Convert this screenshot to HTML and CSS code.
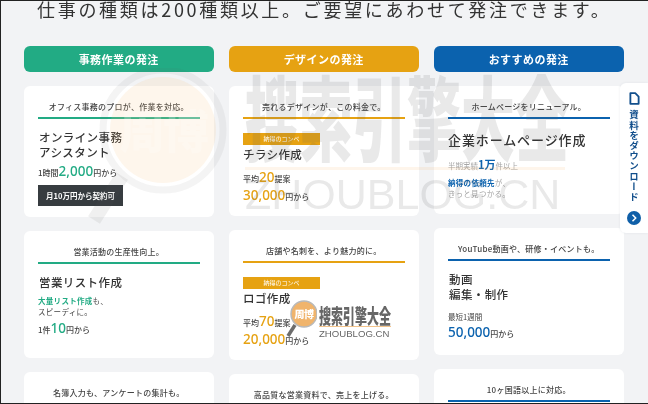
FILE: index.html
```html
<!DOCTYPE html>
<html lang="ja">
<head>
<meta charset="utf-8">
<title>発注</title>
<link rel="stylesheet" href="styles.css">
</head>
<body>
<main class="page">
  <h1 class="lead">仕事の種類は200種類以上。ご要望にあわせて発注できます。</h1>
  <div class="columns">
    <section class="col green">
      <h2 class="head">事務作業の発注</h2>
      <article class="card h1">
        <p class="tag">オフィス事務のプロが、作業を対応。</p>
        <h3 class="title">オンライン事務<br>アシスタント</h3>
        <p class="price-line">1時間<b class="num">2,000</b>円から</p>
        <span class="dark-btn">月10万円から契約可</span>
      </article>
      <article class="card h2">
        <p class="tag">営業活動の生産性向上。</p>
        <h3 class="title">営業リスト作成</h3>
        <p class="note"><b>大量リスト作成</b>も、<br>スピーディに。</p>
        <p class="price-line">1件<b class="num">10</b>円から</p>
      </article>
      <article class="card">
        <p class="tag">名簿入力も、アンケートの集計も。</p>
      </article>
    </section>
    <section class="col orange">
      <h2 class="head">デザインの発注</h2>
      <article class="card h1b">
        <p class="tag">売れるデザインが、この料金で。</p>
        <span class="badge">納得のコンペ</span>
        <h3 class="title">チラシ作成</h3>
        <p class="price-line avg">平均<b class="num">20</b>提案</p>
        <p class="price-line"><b class="num">30,000</b>円から</p>
      </article>
      <article class="card h1b">
        <p class="tag">店舗や名刺を、より魅力的に。</p>
        <span class="badge">納得のコンペ</span>
        <h3 class="title">ロゴ作成</h3>
        <p class="price-line avg">平均<b class="num">70</b>提案</p>
        <p class="price-line"><b class="num">20,000</b>円から</p>
      </article>
      <article class="card">
        <p class="tag">高品質な営業資料で、売上を上げる。</p>
      </article>
    </section>
    <section class="col blue">
      <h2 class="head">おすすめの発注</h2>
      <article class="card h3c">
        <p class="tag">ホームページをリニューアル。</p>
        <h3 class="title big">企業ホームページ作成</h3>
        <p class="small faded">半期実績<b class="num-s">1万</b>件以上</p>
        <p class="note faded tight"><b>納得の依頼先</b>が、<br>きっと見つかる。</p>
      </article>
      <article class="card h3d">
        <p class="tag">YouTube動画や、研修・イベントも。</p>
        <h3 class="title">動画<br>編集・制作</h3>
        <p class="small">最短1週間</p>
        <p class="price-line pull"><b class="num">50,000</b>円から</p>
      </article>
      <article class="card">
        <p class="tag">10ヶ国語以上に対応。</p>
      </article>
    </section>
  </div>
  <aside class="side">
    <svg class="doc" viewBox="0 0 12 14" width="11" height="13" aria-hidden="true"><path d="M1.5 1.2h5.3l3.7 3.7v7.9h-9z" fill="none" stroke="#124f8c" stroke-width="2" stroke-linejoin="round"/></svg>
    <span class="side-text">資料をダウンロード</span>
    <span class="side-go"><svg viewBox="0 0 14 14" width="14" height="14" aria-hidden="true"><path d="M5.5 3.8 8.7 7l-3.2 3.2" fill="none" stroke="#fff" stroke-width="1.5"/></svg></span>
  </aside>
  <div class="mark mark-big" aria-hidden="true">
    <svg class="lens" viewBox="0 0 160 165" width="160" height="165">
      <circle cx="83" cy="62" r="53" class="lens-fill"/>
      <circle cx="83" cy="62" r="60" class="lens-ring"/>
      <path d="M42 108 14 152" class="lens-handle"/>
      <text x="83" y="80" class="lens-text">周博</text>
    </svg>
    <div class="mark-words">
      <span class="mark-cn">搜索引擎大全</span>
      <span class="mark-rule"></span>
      <span class="mark-en">ZHOUBLOG.CN</span>
    </div>
  </div>
  <div class="mark mark-small" aria-hidden="true">
    <svg class="lens-s" viewBox="0 0 34 42" width="34" height="42">
      <circle cx="21" cy="15" r="13" class="s-fill"/>
      <path d="M12 26 5 37" class="s-handle"/>
      <text x="21" y="19" class="s-text">周博</text>
    </svg>
    <div class="mark-words-s">
      <span class="mark-cn-s">搜索引擎大全</span>
      <span class="mark-rule-s"></span>
      <span class="mark-en-s">ZHOUBLOG.CN</span>
    </div>
  </div>
</main>
</body>
</html>
```
FILE: styles.css
```css
* { box-sizing: border-box; margin: 0; padding: 0; }
html, body { width: 648px; height: 404px; overflow: hidden; }
body { font-family: "Noto Sans CJK JP", "Noto Sans", sans-serif; color: #333; }
.page {
  position: relative;
  width: 648px;
  height: 404px;
  overflow: hidden;
  background: #f2f3f5;
  border: 1px solid #222;
  border-right: 0;
  padding: 0 24px 0 23px;
  filter: blur(.3px);
}
.lead {
  font-size: 18px;
  line-height: 18px;
  font-weight: 400;
  letter-spacing: 2.7px;
  white-space: nowrap;
  margin: -1px 0 0 13px;
  color: #333;
}
.columns {
  display: grid;
  grid-template-columns: repeat(3, 189.5px);
  column-gap: 15.5px;
  margin-top: 28px;
}
.col { display: flex; flex-direction: column; }
.head {
  height: 26px;
  border-radius: 6px;
  color: #fff;
  font-size: 11px;
  line-height: 26px;
  font-weight: 700;
  letter-spacing: .45px;
  text-align: center;
  margin-bottom: 14px;
}
.card {
  background: #fff;
  border-radius: 6px;
  padding: 14px 14px 0;
  margin-bottom: 14px;
  min-height: 60px;
}
.h1 { height: 130.5px; }
.h2 { height: 127.5px; }
.h1b { height: 130px; }
.h3c { height: 128px; }
.h3d { height: 127px; }
.tag {
  font-size: 8px;
  line-height: 14px;
  height: 18px;
  letter-spacing: .25px;
  text-align: center;
  white-space: nowrap;
  color: #444;
  font-weight: 500;
}
.tag::after {
  content: "";
  display: block;
  height: 2px;
  margin-top: 3px;
  background: var(--accent);
}
.green { --accent: #22ab84; }
.orange { --accent: #e6a212; }
.blue { --accent: #0b62ae; }
.head { background: var(--accent); }
.title {
  font-size: 11.5px;
  line-height: 15px;
  font-weight: 500;
  letter-spacing: .4px;
  color: #333;
  margin-top: 12px;
  padding-left: 1px;
}
.big { font-size: 13px; letter-spacing: .9px; line-height: 18px; margin-top: 13px; padding-left: 0; }
.price-line {
  font-size: 8px;
  line-height: 18px;
  margin-top: 2px;
  white-space: nowrap;
  color: #444;
  font-weight: 500;
}
.num {
  font-family: "Noto Sans", sans-serif;
  font-size: 13.5px;
  font-weight: 500;
  color: var(--accent);
}
.dark-btn {
  display: block;
  width: 85px;
  height: 21px;
  margin-top: 3px;
  background: #373c40;
  color: #fff;
  font-size: 7.5px;
  font-weight: 700;
  line-height: 21px;
  text-align: center;
}
.badge {
  display: block;
  width: 77px;
  height: 12px;
  margin-top: 15px;
  background: var(--accent);
  color: #fff;
  font-size: 6px;
  line-height: 12px;
  text-align: center;
}
.badge + .title { margin-top: 2px; padding-left: 0; }
.avg { margin-top: 6px; }
.avg + .price-line { margin-top: -2px; }
.note {
  font-size: 7.5px;
  line-height: 11px;
  margin-top: 5px;
  letter-spacing: .3px;
  color: #444;
}
.note b { color: var(--accent); font-weight: 700; }
.tight { margin-top: 4px; }
.faded { color: #a5a5a5; }
.small { font-size: 7.5px; line-height: 14px; margin-top: 8px; color: #444; }
.small.faded { color: #a5a5a5; }
.pull { margin-top: -1px; }
.num-s { font-size: 11px; color: var(--accent); font-weight: 700; }
.side {
  position: absolute;
  right: 0;
  top: 82px;
  width: 28px;
  height: 150px;
  background: #fff;
  border-radius: 6px 0 0 6px;
  box-shadow: 0 0 3px rgba(40,60,90,.08);
  display: flex;
  flex-direction: column;
  align-items: center;
  padding: 9px 0 8px;
  color: #124f8c;
  z-index: 2;
}
.doc { flex: none; }
.side-text {
  writing-mode: vertical-rl;
  font-size: 9.5px;
  line-height: 12px;
  font-weight: 700;
  letter-spacing: .7px;
  margin-top: 5px;
  height: 96px;
  flex: none;
  white-space: nowrap;
}
.side-go {
  flex: none;
  width: 14px;
  height: 14px;
  margin-top: auto;
  border-radius: 50%;
  background: #0f5fa8;
  display: flex;
}
.mark { position: absolute; pointer-events: none; display: flex; }
.mark-big { left: 79px; top: 67px; align-items: flex-start; }
.lens { flex: none; }
.lens-fill { fill: #f8c98a; fill-opacity: .16; }
.lens-ring { fill: none; stroke: #666; stroke-opacity: .07; stroke-width: 7; }
.lens-handle { fill: none; stroke: #555; stroke-opacity: .09; stroke-width: 14; }
.lens-text { font-size: 46px; font-weight: 900; text-anchor: middle; fill: #fff; fill-opacity: .22; letter-spacing: -2px; }
.mark-words { display: flex; flex-direction: column; margin-left: 5px; margin-top: 1px; }
.mark-cn {
  display: block;
  height: 53px;
  margin-bottom: 45px;
  font-size: 54px;
  line-height: 53px;
  font-weight: 900;
  white-space: nowrap;
  color: rgba(100,100,100,.14);
  transform: scaleY(1.7);
  transform-origin: 0 0;
}
.mark-rule { display: block; height: 3px; width: 320px; background: rgba(245,170,90,.12); }
.mark-en {
  font-size: 43px;
  line-height: 44px;
  margin-top: 2px;
  font-family: "Liberation Sans", sans-serif;
  color: rgba(100,100,100,.14);
  white-space: nowrap;
}
.mark-small { left: 282px; top: 298px; }
.s-fill { fill: #f0b46c; stroke: #b9b9b9; stroke-width: 1.5; }
.s-handle { fill: none; stroke: #6d6d6d; stroke-width: 3.5; }
.s-text { font-size: 10px; font-weight: 900; fill: #fff; text-anchor: middle; letter-spacing: -.5px; }
.mark-words-s { display: flex; flex-direction: column; margin-top: 6px; margin-left: 2px; }
.mark-cn-s {
  display: block;
  height: 12px;
  margin-bottom: 9px;
  font-size: 12px;
  line-height: 12px;
  font-weight: 900;
  color: #666;
  white-space: nowrap;
  transform: scaleY(1.7);
  transform-origin: 0 0;
}
.mark-rule-s { display: block; height: 1px; width: 72px; background: #f3c48c; }
.mark-en-s { font-size: 9.6px; line-height: 11px; margin-top: 1px; font-family: "Liberation Sans", sans-serif; color: #666; white-space: nowrap; }
```
